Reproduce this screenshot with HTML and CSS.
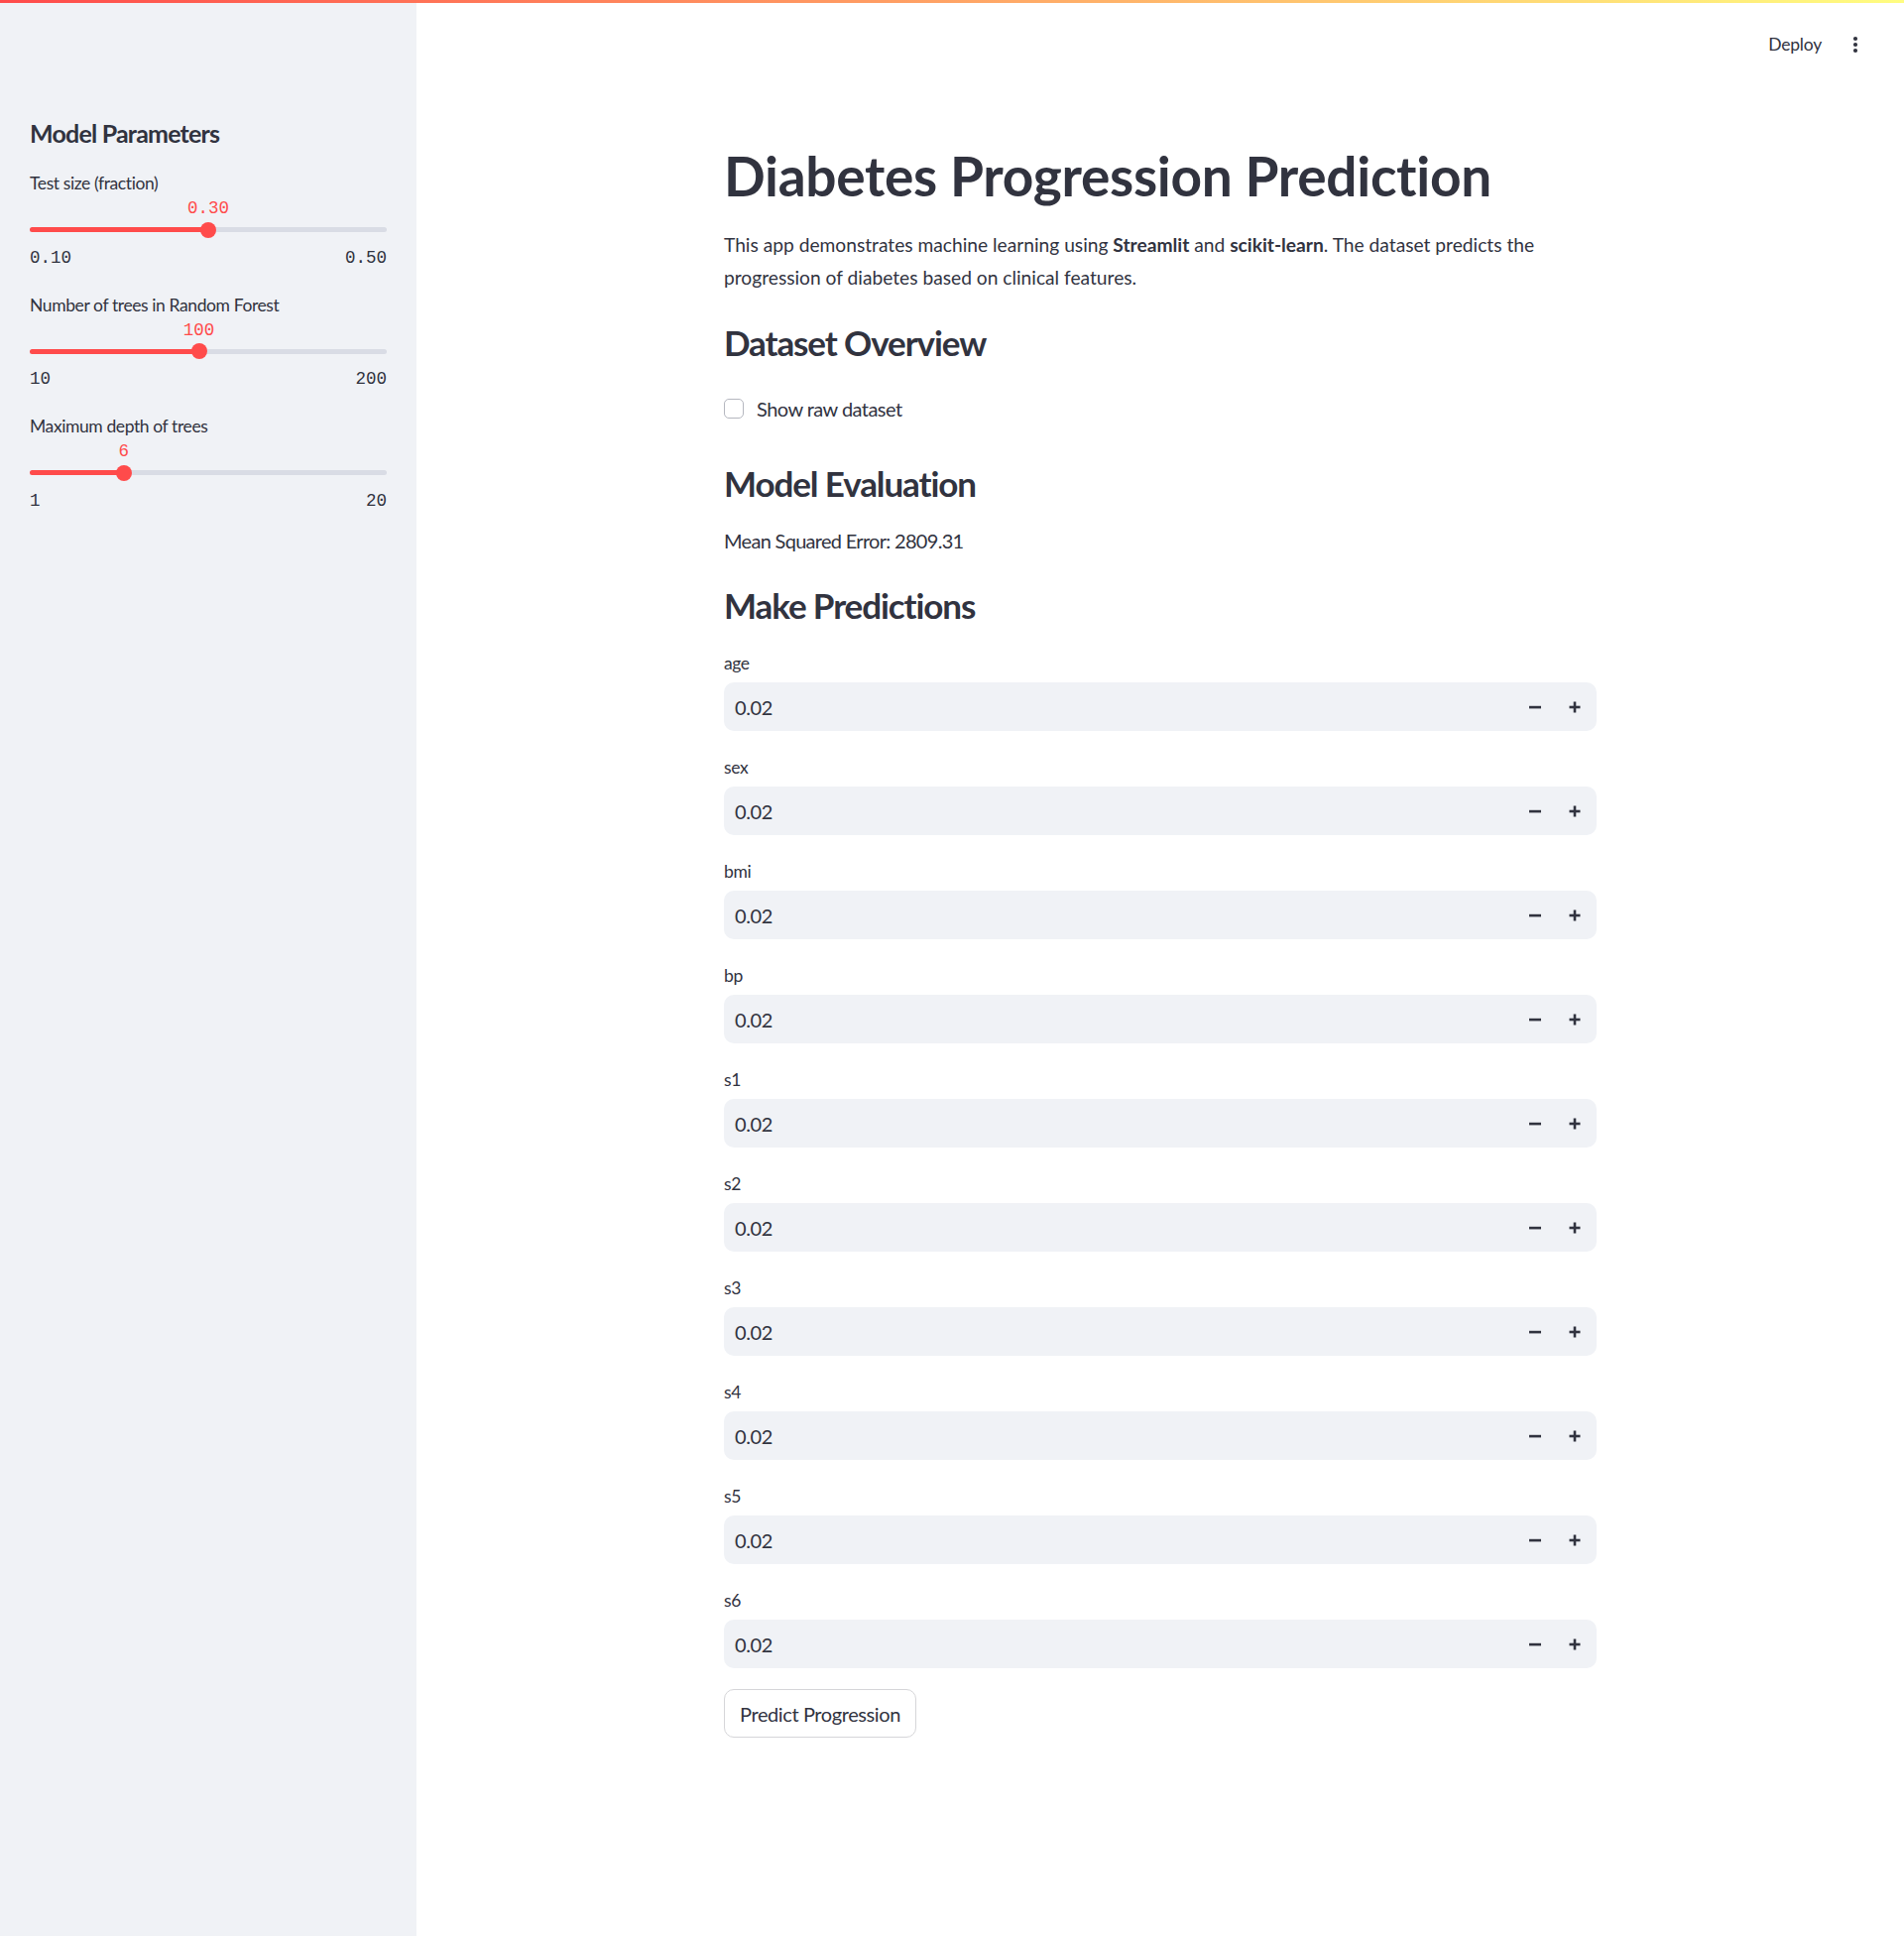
FILE: index.html
```html
<!DOCTYPE html>
<html lang="en">
<head>
<meta charset="utf-8">
<title>Diabetes Progression Prediction</title>
<link rel="stylesheet" href="styles.css">
</head>
<body>
<div class="decoration"></div>
<div class="app">
  <aside class="sidebar">
    <h2 class="side-title">Model Parameters</h2>

    <div class="slider">
      <div class="slider-label">Test size (fraction)</div>
      <div class="track-row">
        <div class="track">
          <div class="fill" style="width:50%"></div>
          <div class="thumb" style="left:50%"><span class="thumb-value">0.30</span></div>
        </div>
      </div>
      <div class="minmax"><span>0.10</span><span>0.50</span></div>
    </div>

    <div class="slider">
      <div class="slider-label">Number of trees in Random Forest</div>
      <div class="track-row">
        <div class="track">
          <div class="fill" style="width:47.37%"></div>
          <div class="thumb" style="left:47.37%"><span class="thumb-value">100</span></div>
        </div>
      </div>
      <div class="minmax"><span>10</span><span>200</span></div>
    </div>

    <div class="slider">
      <div class="slider-label">Maximum depth of trees</div>
      <div class="track-row">
        <div class="track">
          <div class="fill" style="width:26.32%"></div>
          <div class="thumb" style="left:26.32%"><span class="thumb-value">6</span></div>
        </div>
      </div>
      <div class="minmax"><span>1</span><span>20</span></div>
    </div>
  </aside>

  <main class="main">
    <header class="toolbar">
      <span class="deploy">Deploy</span>
      <svg class="kebab" width="20" height="20" viewBox="0 0 20 20" aria-hidden="true">
        <circle cx="10" cy="4" r="2.1" fill="#31333f"/>
        <circle cx="10" cy="10" r="2.1" fill="#31333f"/>
        <circle cx="10" cy="16" r="2.1" fill="#31333f"/>
      </svg>
    </header>

    <div class="content">
      <h1 class="title">Diabetes Progression Prediction</h1>
      <p class="intro"><span class="line">This app demonstrates machine learning using <strong>Streamlit</strong> and <strong>scikit-learn</strong>. The dataset predicts the</span><span class="line">progression of diabetes based on clinical features.</span></p>

      <h3 class="subheader sh-dataset">Dataset Overview</h3>
      <label class="checkbox-row"><span class="checkbox"></span><span class="checkbox-text">Show raw dataset</span></label>

      <h3 class="subheader sh-eval">Model Evaluation</h3>
      <p class="mse">Mean Squared Error: 2809.31</p>

      <h3 class="subheader sh-pred">Make Predictions</h3>

      <div class="fields">
        <div class="field"><div class="field-label">age</div><div class="num-input"><span class="num-value">0.02</span><span class="step"><svg width="14" height="14" viewBox="0 0 14 14"><rect x="1" y="5.8" width="12" height="2.6" fill="#31333f"/></svg></span><span class="step"><svg width="14" height="14" viewBox="0 0 14 14"><rect x="1.5" y="5.7" width="11" height="2.6" fill="#31333f"/><rect x="5.7" y="1.5" width="2.6" height="11" fill="#31333f"/></svg></span></div></div>
        <div class="field"><div class="field-label">sex</div><div class="num-input"><span class="num-value">0.02</span><span class="step"><svg width="14" height="14" viewBox="0 0 14 14"><rect x="1" y="5.8" width="12" height="2.6" fill="#31333f"/></svg></span><span class="step"><svg width="14" height="14" viewBox="0 0 14 14"><rect x="1.5" y="5.7" width="11" height="2.6" fill="#31333f"/><rect x="5.7" y="1.5" width="2.6" height="11" fill="#31333f"/></svg></span></div></div>
        <div class="field"><div class="field-label">bmi</div><div class="num-input"><span class="num-value">0.02</span><span class="step"><svg width="14" height="14" viewBox="0 0 14 14"><rect x="1" y="5.8" width="12" height="2.6" fill="#31333f"/></svg></span><span class="step"><svg width="14" height="14" viewBox="0 0 14 14"><rect x="1.5" y="5.7" width="11" height="2.6" fill="#31333f"/><rect x="5.7" y="1.5" width="2.6" height="11" fill="#31333f"/></svg></span></div></div>
        <div class="field"><div class="field-label">bp</div><div class="num-input"><span class="num-value">0.02</span><span class="step"><svg width="14" height="14" viewBox="0 0 14 14"><rect x="1" y="5.8" width="12" height="2.6" fill="#31333f"/></svg></span><span class="step"><svg width="14" height="14" viewBox="0 0 14 14"><rect x="1.5" y="5.7" width="11" height="2.6" fill="#31333f"/><rect x="5.7" y="1.5" width="2.6" height="11" fill="#31333f"/></svg></span></div></div>
        <div class="field"><div class="field-label">s1</div><div class="num-input"><span class="num-value">0.02</span><span class="step"><svg width="14" height="14" viewBox="0 0 14 14"><rect x="1" y="5.8" width="12" height="2.6" fill="#31333f"/></svg></span><span class="step"><svg width="14" height="14" viewBox="0 0 14 14"><rect x="1.5" y="5.7" width="11" height="2.6" fill="#31333f"/><rect x="5.7" y="1.5" width="2.6" height="11" fill="#31333f"/></svg></span></div></div>
        <div class="field"><div class="field-label">s2</div><div class="num-input"><span class="num-value">0.02</span><span class="step"><svg width="14" height="14" viewBox="0 0 14 14"><rect x="1" y="5.8" width="12" height="2.6" fill="#31333f"/></svg></span><span class="step"><svg width="14" height="14" viewBox="0 0 14 14"><rect x="1.5" y="5.7" width="11" height="2.6" fill="#31333f"/><rect x="5.7" y="1.5" width="2.6" height="11" fill="#31333f"/></svg></span></div></div>
        <div class="field"><div class="field-label">s3</div><div class="num-input"><span class="num-value">0.02</span><span class="step"><svg width="14" height="14" viewBox="0 0 14 14"><rect x="1" y="5.8" width="12" height="2.6" fill="#31333f"/></svg></span><span class="step"><svg width="14" height="14" viewBox="0 0 14 14"><rect x="1.5" y="5.7" width="11" height="2.6" fill="#31333f"/><rect x="5.7" y="1.5" width="2.6" height="11" fill="#31333f"/></svg></span></div></div>
        <div class="field"><div class="field-label">s4</div><div class="num-input"><span class="num-value">0.02</span><span class="step"><svg width="14" height="14" viewBox="0 0 14 14"><rect x="1" y="5.8" width="12" height="2.6" fill="#31333f"/></svg></span><span class="step"><svg width="14" height="14" viewBox="0 0 14 14"><rect x="1.5" y="5.7" width="11" height="2.6" fill="#31333f"/><rect x="5.7" y="1.5" width="2.6" height="11" fill="#31333f"/></svg></span></div></div>
        <div class="field"><div class="field-label">s5</div><div class="num-input"><span class="num-value">0.02</span><span class="step"><svg width="14" height="14" viewBox="0 0 14 14"><rect x="1" y="5.8" width="12" height="2.6" fill="#31333f"/></svg></span><span class="step"><svg width="14" height="14" viewBox="0 0 14 14"><rect x="1.5" y="5.7" width="11" height="2.6" fill="#31333f"/><rect x="5.7" y="1.5" width="2.6" height="11" fill="#31333f"/></svg></span></div></div>
        <div class="field"><div class="field-label">s6</div><div class="num-input"><span class="num-value">0.02</span><span class="step"><svg width="14" height="14" viewBox="0 0 14 14"><rect x="1" y="5.8" width="12" height="2.6" fill="#31333f"/></svg></span><span class="step"><svg width="14" height="14" viewBox="0 0 14 14"><rect x="1.5" y="5.7" width="11" height="2.6" fill="#31333f"/><rect x="5.7" y="1.5" width="2.6" height="11" fill="#31333f"/></svg></span></div></div>
      </div>

      <button class="btn" type="button">Predict Progression</button>
    </div>
  </main>
</div>
</body>
</html>
```

FILE: styles.css
```css
* { box-sizing: border-box; }

html, body {
  margin: 0;
  padding: 0;
  background: #ffffff;
}

body {
  font-family: "Lato", "Open Sans", "Liberation Sans", sans-serif;
  color: #31333f;
  font-size: 20px;
  letter-spacing: -0.4px;
}

.decoration {
  position: fixed;
  top: 0;
  left: 0;
  right: 0;
  height: 3px;
  background: linear-gradient(90deg, #ff4b4b, #fffd80);
  z-index: 10;
}

.app {
  display: flex;
  min-height: 1952px;
}

/* ---------- Sidebar ---------- */
.sidebar {
  width: 420px;
  flex: 0 0 420px;
  background: #f0f2f6;
  padding: 119px 30px 0;
}

.side-title {
  margin: 0;
  font-size: 25px;
  line-height: 30px;
  font-weight: 700;
  letter-spacing: -0.8px;
}

.slider {
  margin-top: 24px;
}

.slider + .slider {
  margin-top: 26px;
}

.slider-label {
  font-size: 17.5px;
  line-height: 24px;
  letter-spacing: -0.4px;
}

.track-row {
  margin-top: 26.5px;
  height: 16px;
  display: flex;
  align-items: center;
}

.track {
  position: relative;
  width: 100%;
  height: 5px;
  border-radius: 3px;
  background: #d9dce5;
}

.fill {
  height: 100%;
  border-radius: 3px;
  background: #ff4b4b;
}

.thumb {
  position: absolute;
  top: 50%;
  width: 16px;
  height: 16px;
  border-radius: 50%;
  background: #ff4b4b;
  transform: translate(-50%, -50%);
}

.thumb-value {
  position: absolute;
  bottom: calc(100% + 3.5px);
  left: 50%;
  transform: translateX(-50%);
  font-family: "Liberation Mono", "DejaVu Sans Mono", monospace;
  font-size: 17.5px;
  line-height: 20px;
  letter-spacing: 0;
  color: #ff4b4b;
  white-space: nowrap;
}

.minmax {
  margin-top: 10px;
  display: flex;
  justify-content: space-between;
  font-family: "Liberation Mono", "DejaVu Sans Mono", monospace;
  font-size: 17.5px;
  line-height: 20px;
  letter-spacing: 0;
}

/* ---------- Main ---------- */
.main {
  flex: 1;
  display: flex;
  flex-direction: column;
}

.toolbar {
  height: 90px;
  display: flex;
  align-items: center;
  justify-content: flex-end;
  gap: 24px;
  padding-right: 39px;
}

.deploy {
  font-size: 17.5px;
  line-height: 24px;
  letter-spacing: -0.2px;
}

.kebab {
  display: block;
}

.content {
  width: 880px;
  margin: 0 auto;
  padding-top: 54px;
}

.title {
  margin: 0;
  font-size: 55px;
  line-height: 66px;
  font-weight: 700;
  letter-spacing: -0.3px;
}

.intro {
  margin: 20px 0 0;
  font-size: 19.2px;
  line-height: 33px;
  letter-spacing: 0;
}

.intro .line {
  display: block;
  white-space: nowrap;
}

.intro strong {
  font-weight: 700;
}

.subheader {
  margin: 0;
  font-size: 35px;
  line-height: 42px;
  font-weight: 700;
  letter-spacing: -1.1px;
}

.sh-dataset { margin-top: 28px; }
.sh-eval { margin-top: 39px; }
.sh-pred { margin-top: 28px; }

.checkbox-row {
  margin-top: 31px;
  height: 30px;
  display: flex;
  align-items: center;
  gap: 13px;
}

.checkbox {
  width: 20px;
  height: 20px;
  border: 1px solid #b5b7bf;
  border-radius: 5px;
  background: #ffffff;
}

.checkbox-text {
  font-size: 20px;
  letter-spacing: -0.55px;
}

.mse {
  margin: 21px 0 0;
  line-height: 32px;
  letter-spacing: -0.7px;
}

.fields {
  margin-top: 26px;
  display: flex;
  flex-direction: column;
  gap: 25px;
}

.field-label {
  font-size: 17.5px;
  line-height: 24px;
}

.num-input {
  margin-top: 7px;
  height: 49px;
  border-radius: 10px;
  background: #f0f2f6;
  display: flex;
  align-items: center;
  padding-right: 2px;
}

.num-value {
  flex: 1;
  padding-left: 11px;
  font-size: 20px;
}

.step {
  width: 40px;
  height: 100%;
  display: flex;
  align-items: center;
  justify-content: center;
}

.step svg {
  display: block;
}

.btn {
  margin-top: 21px;
  height: 49px;
  padding: 0 15px;
  border: 1px solid #d6d6d9;
  border-radius: 10px;
  background: #ffffff;
  color: #31333f;
  font-family: inherit;
  font-size: 20px;
  letter-spacing: -0.4px;
}
```
